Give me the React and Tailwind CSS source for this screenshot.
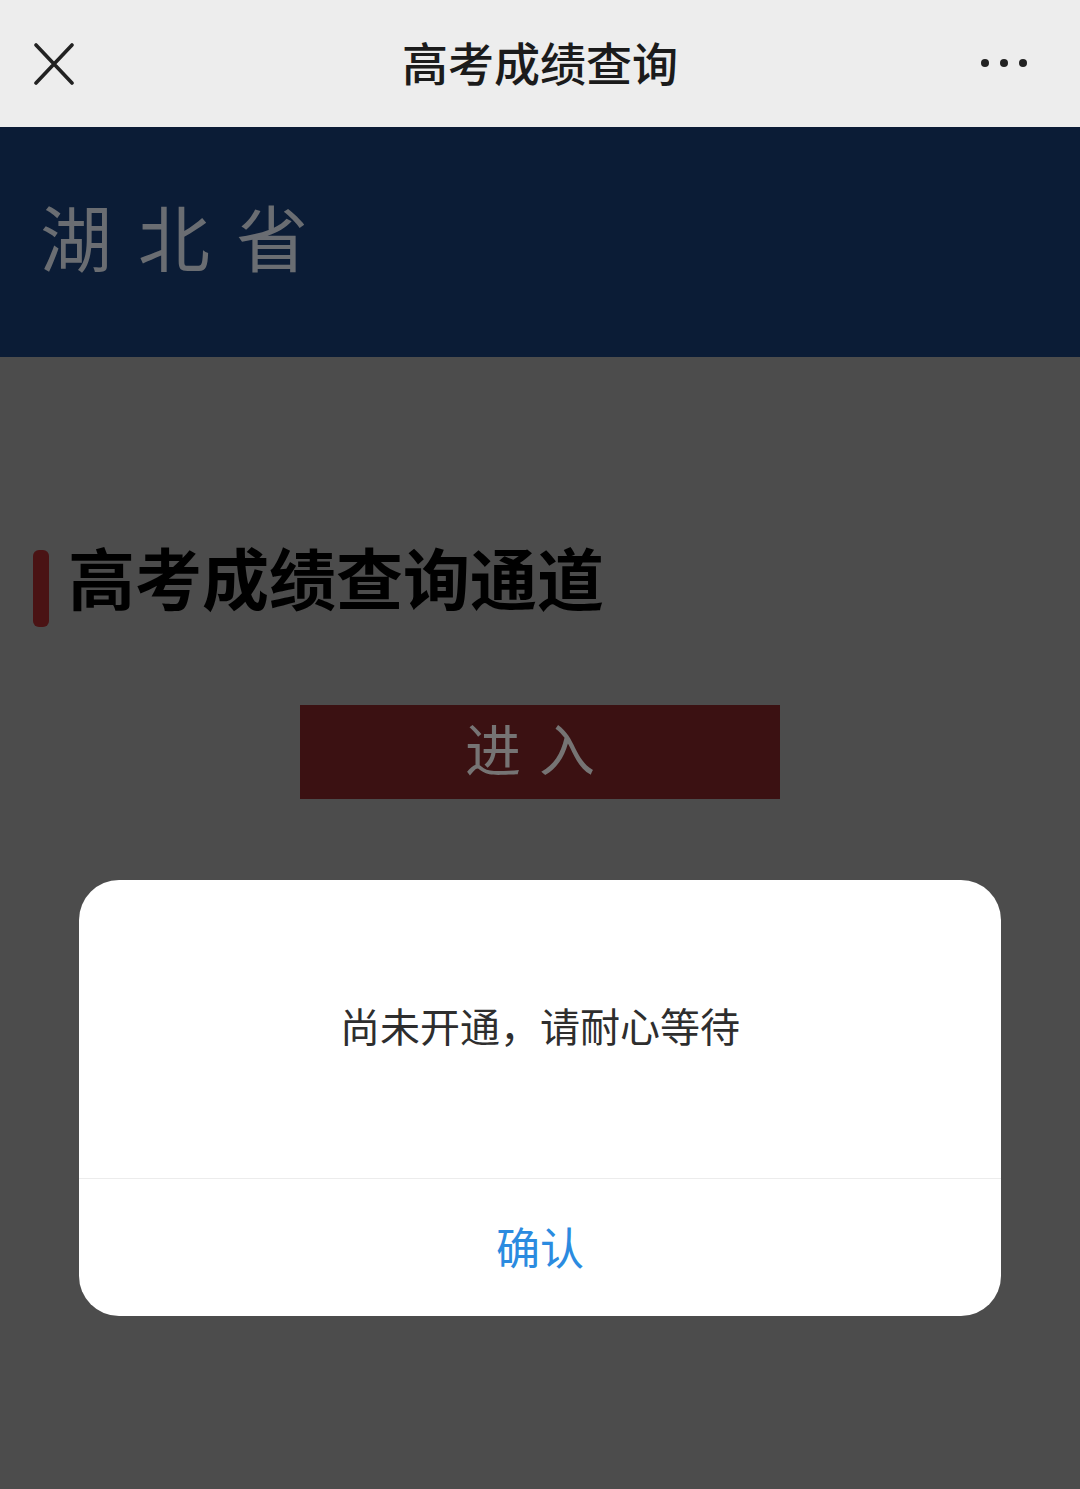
import React from "react";

const cjk = { fontFamily: '"Noto Sans CJK SC", "Noto Sans", sans-serif' };

export default function App() {
  return (
    <div className="relative w-[1080px] h-[1489px] overflow-hidden bg-[#4c4c4c]" style={cjk}>
      {/* Top nav bar */}
      <div className="h-[127px] bg-[#ededed] grid grid-cols-[150px_1fr_150px] items-center">
        <div className="pl-[33px] flex items-center">
          <svg width="42" height="42" viewBox="0 0 42 42">
            <path d="M3 2 L39 40 M39 2 L3 40" stroke="#222" strokeWidth="3.6" strokeLinecap="round" />
          </svg>
        </div>
        <div className="text-center text-[46px] leading-none text-[#1b1b1b] font-medium -mt-[6px]">高考成绩查询</div>
        <div className="flex items-center justify-end gap-[11px] pr-[53px] -mt-[2px]">
          <span className="w-[8px] h-[8px] rounded-full bg-[#222]" />
          <span className="w-[8px] h-[8px] rounded-full bg-[#222]" />
          <span className="w-[8px] h-[8px] rounded-full bg-[#222]" />
        </div>
      </div>

      {/* Province header */}
      <div className="h-[230px] bg-[#0b1c36] flex items-center pl-[40px] pb-[14px]">
        <div className="text-[72px] leading-none text-[#6a6d72] tracking-[26px]">湖北省</div>
      </div>

      {/* Section title */}
      <div className="pt-[193px] pl-[33px] flex items-center gap-[19px]">
        <div className="w-[16px] h-[77px] rounded-[6px] bg-[#4a1314]" />
        <div className="text-[67px] leading-none font-bold text-black -mt-[26px]">高考成绩查询通道</div>
      </div>

      {/* Enter button */}
      <div className="flex justify-center pt-[78px]">
        <div className="w-[480px] h-[94px] bg-[#3b1112] flex items-center justify-center">
          <span className="text-[56px] leading-none text-[#767474] tracking-[18px] -mt-[10px] -ml-[2px]">进入</span>
        </div>
      </div>

      {/* Dialog */}
      <div className="absolute left-[79px] top-[880px] w-[922px] h-[436px] bg-white rounded-[40px] flex flex-col overflow-hidden">
        <div className="h-[299px] flex items-center justify-center border-b border-[#ececec]">
          <span className="text-[40px] leading-none text-[#2e2e2e] -mt-[8px]">尚未开通，请耐心等待</span>
        </div>
        <div className="flex-1 flex items-center justify-center">
          <span className="text-[44px] leading-none text-[#2b8be0] -mt-[4px]">确认</span>
        </div>
      </div>
    </div>
  );
}
